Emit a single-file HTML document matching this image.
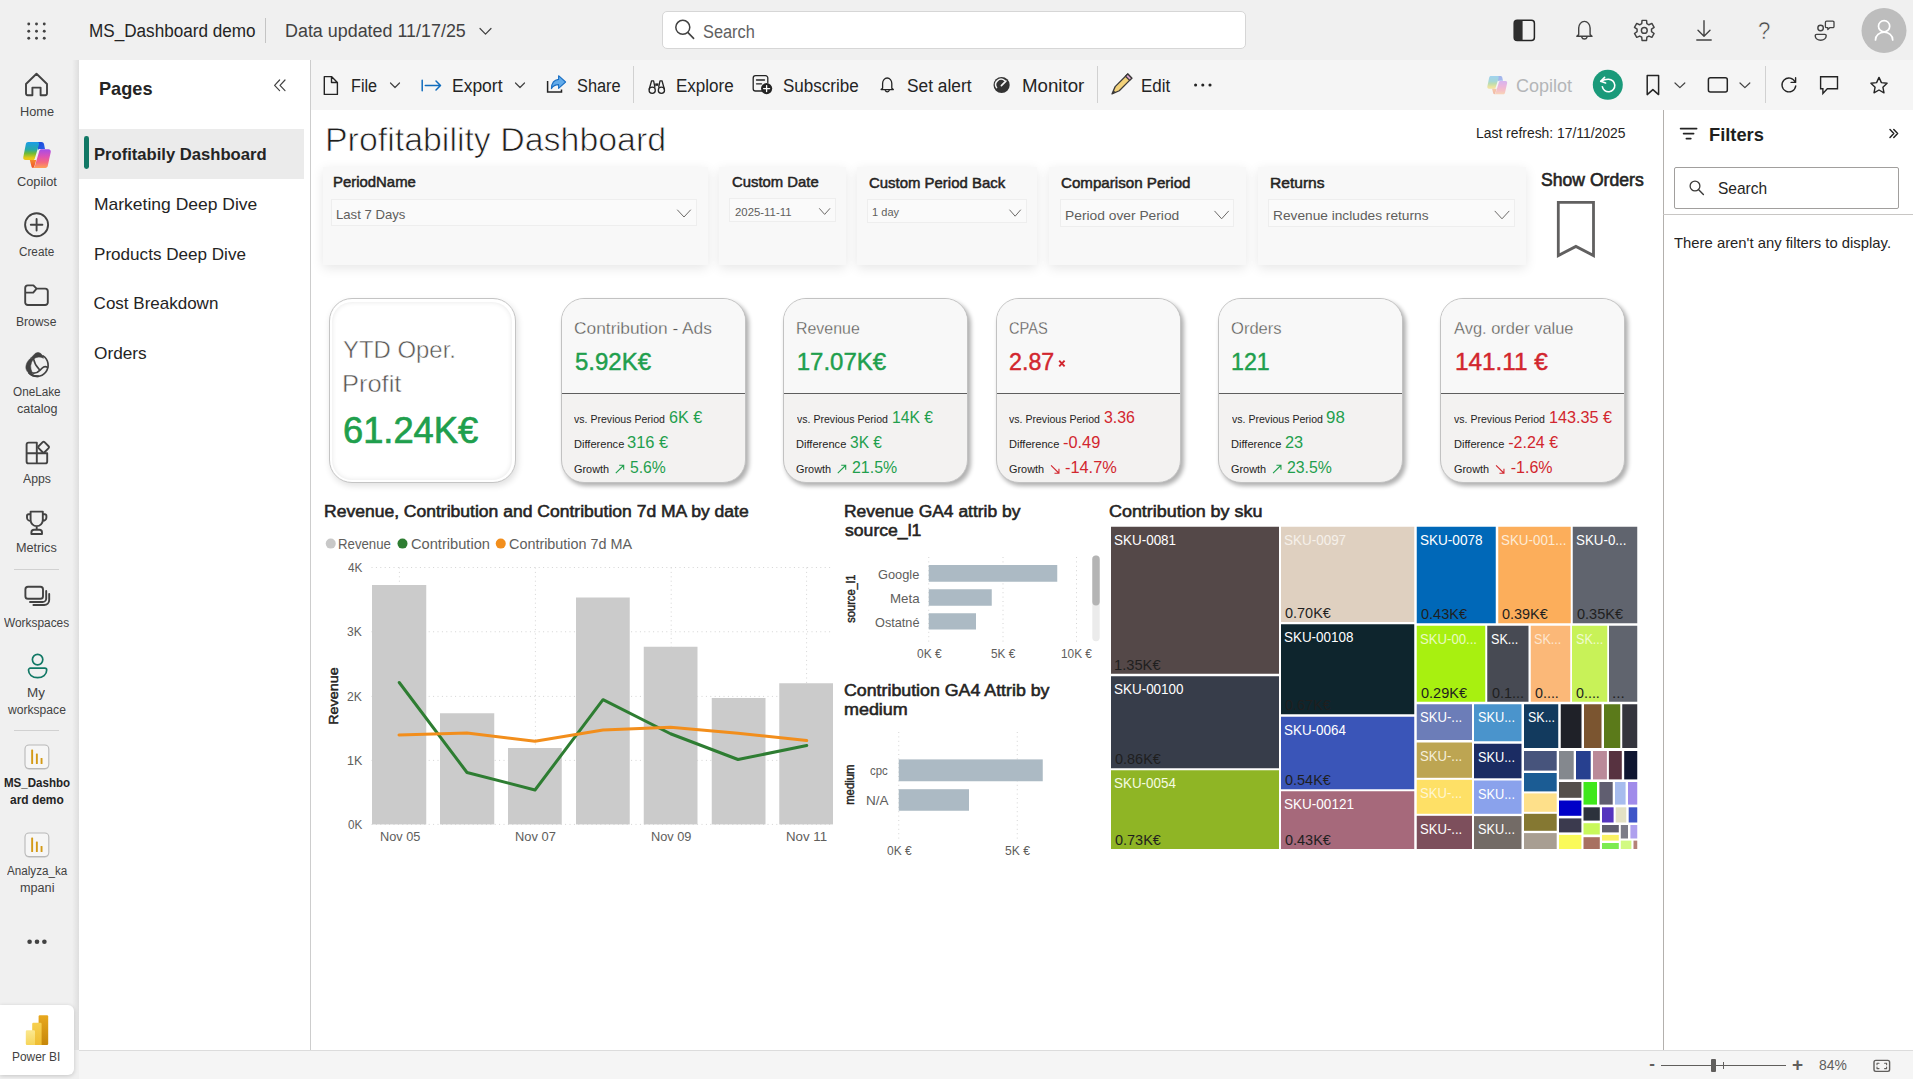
<!DOCTYPE html>
<html lang="en"><head><meta charset="utf-8"><title>MS_Dashboard demo - Power BI</title><style>
html,body{margin:0;padding:0}
body{width:1913px;height:1079px;overflow:hidden;background:#f0f0f0;position:relative;font-family:"Liberation Sans",sans-serif;}
.b{position:absolute;box-sizing:content-box}
.t{position:absolute;white-space:pre;display:block;transform-origin:0 50%}
.ov{position:absolute;left:0;top:0;pointer-events:none}
</style></head>
<body>
<div class="b" style="left:72px;top:60px;width:7px;height:990px;background:linear-gradient(to right,rgba(0,0,0,0),rgba(0,0,0,.075));"></div>
<div class="b" style="left:79px;top:60px;width:231px;height:990px;background:#fff;"></div>
<div class="b" style="left:310px;top:60px;width:1px;height:990px;background:#cdcdcd;"></div>
<div class="b" style="left:311px;top:60px;width:1602px;height:50px;background:#f5f5f5;"></div>
<div class="b" style="left:311px;top:110px;width:1352px;height:940px;background:#fff;"></div>
<div class="b" style="left:1663px;top:110px;width:250px;height:940px;background:#fff;"></div>
<div class="b" style="left:1662.5px;top:110px;width:1.3px;height:940px;background:#b3b0ad;"></div>
<div class="b" style="left:79px;top:1050px;width:1834px;height:29px;background:#f5f5f5;border-top:1px solid #dcdcdc;"></div>
<div class="b" style="left:0px;top:1005px;width:74px;height:70px;background:#fff;border-radius:0 6px 6px 0;box-shadow:0 1px 4px rgba(0,0,0,.18);"></div>
<div class="b" style="left:661.75px;top:10.5px;width:581.75px;height:36.75px;background:#fff;border:1px solid #d6d6d6;border-radius:5px;"></div>
<div class="b" style="left:79px;top:129px;width:224.5px;height:49.5px;background:#ebebeb;"></div>
<div class="b" style="left:84px;top:136px;width:4.8px;height:33px;background:#117865;border-radius:2.4px;"></div>
<div class="b" style="left:13.75px;top:569px;width:45px;height:1px;background:#d1d1d1;"></div>
<div class="b" style="left:13.75px;top:730px;width:45px;height:1px;background:#d1d1d1;"></div>
<div class="b" style="left:264.6px;top:18px;width:1px;height:24.5px;background:#c4c4c4;"></div>
<div class="b" style="left:633px;top:66px;width:1px;height:37px;background:#d1d1d1;"></div>
<div class="b" style="left:1097px;top:66px;width:1px;height:37px;background:#d1d1d1;"></div>
<div class="b" style="left:1765px;top:66px;width:1px;height:37px;background:#d1d1d1;"></div>
<div class="b" style="left:1674px;top:167px;width:222.9px;height:40.1px;background:#fff;border:1px solid #a19f9d;border-radius:2px;"></div>
<div class="b" style="left:1663px;top:214px;width:250px;height:1px;background:#c8c6c4;"></div>
<span class="t" style="left:88.55px;top:21.76px;font-size:18px;line-height:18px;color:#242424;transform:scaleX(0.9515);">MS_Dashboard demo</span>
<span class="t" style="left:285.01px;top:21.76px;font-size:18px;line-height:18px;color:#424242;transform:scaleX(0.9944);">Data updated 11/17/25</span>
<span class="t" style="left:703.12px;top:22.76px;font-size:18px;line-height:18px;color:#616161;transform:scaleX(0.9086);">Search</span>
<span class="t" style="left:19.51px;top:105.84px;font-size:12px;line-height:12px;color:#424242;transform:scaleX(1.0614);">Home</span>
<span class="t" style="left:16.77px;top:176.34px;font-size:12px;line-height:12px;color:#424242;transform:scaleX(1.0652);">Copilot</span>
<span class="t" style="left:19.29px;top:246.34px;font-size:12px;line-height:12px;color:#424242;transform:scaleX(0.9763);">Create</span>
<span class="t" style="left:16.31px;top:315.84px;font-size:12px;line-height:12px;color:#424242;transform:scaleX(1.0098);">Browse</span>
<span class="t" style="left:13.19px;top:386.09px;font-size:12px;line-height:12px;color:#424242;transform:scaleX(0.9777);">OneLake</span>
<span class="t" style="left:16.83px;top:402.84px;font-size:12px;line-height:12px;color:#424242;transform:scaleX(1.0461);">catalog</span>
<span class="t" style="left:22.95px;top:472.84px;font-size:12px;line-height:12px;color:#424242;transform:scaleX(1.0185);">Apps</span>
<span class="t" style="left:16.01px;top:542.34px;font-size:12px;line-height:12px;color:#424242;transform:scaleX(1.0537);">Metrics</span>
<span class="t" style="left:4.33px;top:617.09px;font-size:12px;line-height:12px;color:#424242;transform:scaleX(0.9904);">Workspaces</span>
<span class="t" style="left:27.24px;top:687.09px;font-size:12px;line-height:12px;color:#424242;transform:scaleX(1.1200);">My</span>
<span class="t" style="left:7.95px;top:703.59px;font-size:12px;line-height:12px;color:#424242;transform:scaleX(1.0088);">workspace</span>
<span class="t" style="left:4.45px;top:777.34px;font-size:12px;line-height:12px;color:#242424;font-weight:700;transform:scaleX(0.9624);">MS_Dashbo</span>
<span class="t" style="left:10.02px;top:794.09px;font-size:12px;line-height:12px;color:#242424;font-weight:700;transform:scaleX(0.9954);">ard demo</span>
<span class="t" style="left:7.02px;top:864.84px;font-size:12px;line-height:12px;color:#424242;transform:scaleX(0.9704);">Analyza_ka</span>
<span class="t" style="left:20.02px;top:882.34px;font-size:12px;line-height:12px;color:#424242;transform:scaleX(1.0547);">mpani</span>
<span class="t" style="left:12.35px;top:1050.59px;font-size:12px;line-height:12px;color:#424242;transform:scaleX(0.9922);">Power BI</span>
<span class="t" style="left:98.52px;top:80.09px;font-size:18.5px;line-height:18.5px;color:#242424;font-weight:700;transform:scaleX(0.9811);">Pages</span>
<span class="t" style="left:93.52px;top:145.61px;font-size:17px;line-height:17px;color:#242424;font-weight:700;transform:scaleX(0.9771);">Profitabily Dashboard</span>
<span class="t" style="left:93.97px;top:195.61px;font-size:17px;line-height:17px;color:#242424;transform:scaleX(1.0287);">Marketing Deep Dive</span>
<span class="t" style="left:93.99px;top:245.61px;font-size:17px;line-height:17px;color:#242424;transform:scaleX(1.0051);">Products Deep Dive</span>
<span class="t" style="left:93.62px;top:295.11px;font-size:17px;line-height:17px;color:#242424;">Cost Breakdown</span>
<span class="t" style="left:93.72px;top:345.11px;font-size:17px;line-height:17px;color:#242424;transform:scaleX(1.0137);">Orders</span>
<span class="t" style="left:351.10px;top:76.51px;font-size:18px;line-height:18px;color:#242424;transform:scaleX(0.9004);">File</span>
<span class="t" style="left:451.53px;top:76.51px;font-size:18px;line-height:18px;color:#242424;transform:scaleX(0.9706);">Export</span>
<span class="t" style="left:577.12px;top:76.51px;font-size:18px;line-height:18px;color:#242424;transform:scaleX(0.9083);">Share</span>
<span class="t" style="left:676.05px;top:76.51px;font-size:18px;line-height:18px;color:#242424;transform:scaleX(0.9458);">Explore</span>
<span class="t" style="left:782.58px;top:76.51px;font-size:18px;line-height:18px;color:#242424;transform:scaleX(0.9458);">Subscribe</span>
<span class="t" style="left:907.07px;top:76.51px;font-size:18px;line-height:18px;color:#242424;transform:scaleX(0.9617);">Set alert</span>
<span class="t" style="left:1021.96px;top:76.51px;font-size:18px;line-height:18px;color:#242424;transform:scaleX(1.0373);">Monitor</span>
<span class="t" style="left:1140.56px;top:76.51px;font-size:18px;line-height:18px;color:#242424;transform:scaleX(0.9417);">Edit</span>
<span class="t" style="left:1516.05px;top:76.51px;font-size:18px;line-height:18px;color:#b4b6b8;">Copilot</span>
<span class="t" style="left:1757.50px;top:19.51px;font-size:23.5px;line-height:23.5px;color:#424242;transform:scaleX(0.9465);-webkit-text-stroke:.5px #f0f0f0;">?</span>
<span class="t" style="left:1708.54px;top:125.17px;font-size:19px;line-height:19px;color:#201f1e;font-weight:700;transform:scaleX(0.9630);">Filters</span>
<span class="t" style="left:1718.13px;top:180.11px;font-size:17px;line-height:17px;color:#252423;transform:scaleX(0.9127);">Search</span>
<span class="t" style="left:1674.18px;top:236.48px;font-size:14.5px;line-height:14.5px;color:#252423;transform:scaleX(1.0235);">There aren't any filters to display.</span>
<span class="t" style="left:1649.27px;top:1055.11px;font-size:17px;line-height:17px;color:#605e5c;font-weight:700;">-</span>
<span class="t" style="left:1791.90px;top:1054.92px;font-size:19px;line-height:19px;color:#605e5c;font-weight:700;">+</span>
<span class="t" style="left:1819.23px;top:1058.15px;font-size:14px;line-height:14px;color:#605e5c;transform:scaleX(0.9916);">84%</span>
<div class="b" style="left:1661px;top:1064.5px;width:125px;height:1px;background:#605e5c;"></div>
<div class="b" style="left:1710.5px;top:1058.5px;width:5px;height:13.5px;background:#605e5c;border-radius:1px;"></div>
<div class="b" style="left:1723px;top:1062px;width:1px;height:6.5px;background:#605e5c;"></div>
<svg class="ov" width="1913" height="1079" viewBox="0 0 1913 1079"><circle cx="28.75" cy="24" r="1.45" stroke="none" stroke-width="0" fill="#424242"/><circle cx="28.75" cy="31.25" r="1.45" stroke="none" stroke-width="0" fill="#424242"/><circle cx="28.75" cy="38.25" r="1.45" stroke="none" stroke-width="0" fill="#424242"/><circle cx="36.5" cy="24" r="1.45" stroke="none" stroke-width="0" fill="#424242"/><circle cx="36.5" cy="31.25" r="1.45" stroke="none" stroke-width="0" fill="#424242"/><circle cx="36.5" cy="38.25" r="1.45" stroke="none" stroke-width="0" fill="#424242"/><circle cx="44.25" cy="24" r="1.45" stroke="none" stroke-width="0" fill="#424242"/><circle cx="44.25" cy="31.25" r="1.45" stroke="none" stroke-width="0" fill="#424242"/><circle cx="44.25" cy="38.25" r="1.45" stroke="none" stroke-width="0" fill="#424242"/><path d="M480 28.5 L485.5 34.2 L491 28.5" stroke="#424242" stroke-width="1.2" fill="none" stroke-linecap="round" stroke-linejoin="round" /><circle cx="682.8" cy="27.3" r="7" stroke="#424242" stroke-width="1.5" fill="none"/><path d="M688 32.6 L693.6 38.4" stroke="#424242" stroke-width="1.6" fill="none" stroke-linecap="round" stroke-linejoin="round" /><rect x="1514.2" y="20.2" width="20.2" height="20.2" rx="3" stroke="#242424" stroke-width="1.5" fill="none"/><path d="M1517 20.2 h5.6 v20.2 h-5.6 a2.8 2.8 0 0 1 -2.8 -2.8 v-14.6 a2.8 2.8 0 0 1 2.8 -2.8z" fill="#2e2e2e"/><path d="M1578.7 34.6 V28 a5.7 6.6 0 0 1 11.4 0 V34.6 l1.9 1.6 H1576.8 z" stroke="#424242" stroke-width="1.4" fill="none" stroke-linecap="round" stroke-linejoin="round" /><path d="M1581.8 37.3 a2.7 2.4 0 0 0 5.2 0" stroke="#424242" stroke-width="1.4" fill="none" stroke-linecap="round" stroke-linejoin="round" /><path d="M1641.73 23.57 L1642.05 20.35 L1646.55 20.35 L1646.87 23.57 L1648.93 24.76 L1651.88 23.43 L1654.13 27.32 L1651.50 29.21 L1651.50 31.59 L1654.13 33.48 L1651.88 37.37 L1648.93 36.04 L1646.87 37.23 L1646.55 40.45 L1642.05 40.45 L1641.73 37.23 L1639.67 36.04 L1636.72 37.37 L1634.47 33.48 L1637.10 31.59 L1637.10 29.21 L1634.47 27.32 L1636.72 23.43 L1639.67 24.76Z" stroke="#424242" stroke-width="1.45" fill="none" stroke-linecap="round" stroke-linejoin="round" /><circle cx="1644.3" cy="30.4" r="2.9" stroke="#424242" stroke-width="1.45" fill="none"/><path d="M1704 20.8 V36 M1698 30.3 L1704 36.3 L1710 30.3 M1696.8 40 H1711.2" stroke="#424242" stroke-width="1.4" fill="none" stroke-linecap="round" stroke-linejoin="round" /><circle cx="1820.6" cy="28" r="2.75" stroke="#424242" stroke-width="1.4" fill="none"/><path d="M1816.6 34.4 H1824.8 a1.4 1.4 0 0 1 1.4 1.4 C1826.2 38.6 1823.6 40.2 1820.7 40.2 C1817.8 40.2 1815.2 38.6 1815.2 35.8 a1.4 1.4 0 0 1 1.4 -1.4z" stroke="#424242" stroke-width="1.4" fill="none" stroke-linecap="round" stroke-linejoin="round" /><path d="M1826.6 21.2 h6.2 a1.2 1.2 0 0 1 1.2 1.2 v4 a1.2 1.2 0 0 1 -1.2 1.2 h-2.8 l-2.2 2 v-2 h-1.2 a1.2 1.2 0 0 1 -1.2 -1.2 v-4 a1.2 1.2 0 0 1 1.2 -1.2z" stroke="#424242" stroke-width="1.3" fill="none" stroke-linecap="round" stroke-linejoin="round" /><circle cx="1884" cy="30.5" r="22.5" stroke="none" stroke-width="0" fill="#bdbdbd"/><circle cx="1884.1" cy="26.2" r="5.6" stroke="#fff" stroke-width="1.7" fill="none"/><path d="M1875.5 39.9 a8.6 7.7 0 0 1 17.2 0" stroke="#fff" stroke-width="1.7" fill="none" stroke-linecap="round" stroke-linejoin="round" /><path d="M324.3 76.6 h7.2 l5.9 5.9 v11.9 h-13.1z M331.5 76.6 v5.9 h5.9" stroke="#242424" stroke-width="1.4" fill="none" stroke-linecap="round" stroke-linejoin="round" /><path d="M390.5 83 L395.0 87.5 L399.5 83" stroke="#424242" stroke-width="1.2" fill="none" stroke-linecap="round" stroke-linejoin="round" /><path d="M422.2 80.3 V90.7 M425.3 85.5 H440.3 M436 81 L440.5 85.5 L436 90" stroke="#0f6cbd" stroke-width="1.5" fill="none" stroke-linecap="round" stroke-linejoin="round" /><path d="M515.5 83 L520.0 87.5 L524.5 83" stroke="#424242" stroke-width="1.2" fill="none" stroke-linecap="round" stroke-linejoin="round" /><path d="M547.6 81 V92 H561.5 V89.5" stroke="#242424" stroke-width="1.5" fill="none" stroke-linejoin="miter"/><path d="M558.6 75.7 L565.6 82 L558.6 88.3 V84.6 C555.3 84.6 553 85.9 551.4 88.6 C551.6 83.4 554 79.9 558.6 79.4z" stroke="#1a6fc4" stroke-width="1.1" fill="#62abea" stroke-linecap="round" stroke-linejoin="round" /><path d="M651.6 80.8 h2 l1.3 6.4 M662 80.8 h-2 l-1.3 6.4 M651.6 80.8 l-2.4 8.4 M662 80.8 l2.4 8.4" stroke="#242424" stroke-width="1.3" fill="none" stroke-linecap="round" stroke-linejoin="round" /><rect x="655.2" y="83.4" width="3.2" height="2.4" fill="#242424"/><circle cx="652.2" cy="90.2" r="3.1" stroke="#242424" stroke-width="1.3" fill="none"/><circle cx="661.4" cy="90.2" r="3.1" stroke="#242424" stroke-width="1.3" fill="none"/><path d="M762 91 h-6.5 a2.3 2.3 0 0 1 -2.3 -2.3 v-10.7 a2.3 2.3 0 0 1 2.3 -2.3 h10 a2.3 2.3 0 0 1 2.3 2.3 v4.5 M756.5 80 h8 M756.5 83.8 h5" stroke="#242424" stroke-width="1.3" fill="none" stroke-linecap="round" stroke-linejoin="round" /><circle cx="766.6" cy="88.6" r="5.6" stroke="none" stroke-width="0" fill="#242424"/><path d="M766.6 85.6 v6 M763.6 88.6 h6" stroke="#fff" stroke-width="1.3" fill="none" stroke-linecap="round" stroke-linejoin="round" /><path d="M882.6 88.2 V83.4 a4.6 5.4 0 0 1 9.2 0 V88.2 l1.5 1.4 H881.1z" stroke="#242424" stroke-width="1.3" fill="none" stroke-linecap="round" stroke-linejoin="round" /><path d="M885.3 90.6 a2.1 1.9 0 0 0 3.9 0" stroke="#242424" stroke-width="1.3" fill="none" stroke-linecap="round" stroke-linejoin="round" /><circle cx="1001.6" cy="85" r="8.1" stroke="none" stroke-width="0" fill="#333333"/><path d="M996.6 87.6 A5.4 5.4 0 0 1 1004.6 80.5" stroke="#f5f5f5" stroke-width="1.5" fill="none" stroke-linecap="round" stroke-linejoin="round" /><path d="M1001.4 85.6 L1005.9 81.2" stroke="#f5f5f5" stroke-width="1.7" fill="none" stroke-linecap="round" stroke-linejoin="round" /><g transform="translate(1120.9 85) rotate(45)"><path d="M-2.9 -12.6 h5.8 v17.8 l-2.9 7.4 l-2.9 -7.4z" fill="#f3d27a" stroke="#3b3a39" stroke-width="1.3" stroke-linejoin="round"/><path d="M-2.9 -12.6 h5.8 v3.2 h-5.8z" fill="#dba6cf" stroke="#3b3a39" stroke-width="1.3" stroke-linejoin="round"/><path d="M-1.5 8.9 h3 l-1.5 3.7z" fill="#3b3a39"/></g><circle cx="1195.6" cy="85" r="1.55" stroke="none" stroke-width="0" fill="#242424"/><circle cx="1202.8" cy="85" r="1.55" stroke="none" stroke-width="0" fill="#242424"/><circle cx="1210" cy="85" r="1.55" stroke="none" stroke-width="0" fill="#242424"/><g opacity="0.38" transform="translate(1487.3 76) scale(0.72 0.7)"><defs><linearGradient id="cpA" x1="0" y1="0" x2="0" y2="1"><stop offset="0" stop-color="#1a9ce8"/><stop offset=".42" stop-color="#27a9a6"/><stop offset=".62" stop-color="#6cba3a"/><stop offset=".88" stop-color="#e4c916"/><stop offset="1" stop-color="#ecc71c"/></linearGradient><linearGradient id="cpB" x1="0" y1="0" x2="1" y2="1"><stop offset="0" stop-color="#1746d6"/><stop offset="1" stop-color="#2d62ea"/></linearGradient><linearGradient id="cpC" x1="0" y1="0" x2="0" y2="1"><stop offset="0" stop-color="#a64ce8"/><stop offset=".4" stop-color="#de52b4"/><stop offset=".7" stop-color="#f4687e"/><stop offset="1" stop-color="#ffa056"/></linearGradient><linearGradient id="cpD" x1="0" y1="0" x2="0" y2="1"><stop offset="0" stop-color="#f58a2c"/><stop offset="1" stop-color="#ef4f2a"/></linearGradient></defs><path d="M13.6 0 H18.2 C19.6 0 20.5 0.8 20.8 2.1 L21.8 6.9 H16.6 C15.6 6.9 15.1 7.3 14.8 8.3 Z" fill="url(#cpB)"/><path d="M5 0 H14.2 C15.8 0 16.2 1 15.8 2.4 L11.6 16.6 C11.3 17.6 10.6 18.1 9.6 18.1 H2.4 C0.6 18.1 -0.3 16.8 0.1 15 L2.6 2.2 C2.9 0.8 3.7 0 5 0Z" fill="url(#cpA)"/><path d="M6.6 18.1 H13 L11.3 24 C11 25.2 10.6 25.9 9.8 25.9 C8.9 25.9 8.5 25.3 8.2 24.2Z" fill="url(#cpD)"/><path d="M18.6 7.2 H25.2 C27 7.2 27.9 8.5 27.5 10.3 L24.6 23.8 C24.3 25.2 23.5 25.9 22.2 25.9 H10 C11 25.6 11.4 25 11.8 23.6 L16 9.2 C16.4 7.8 17.2 7.2 18.6 7.2Z" fill="url(#cpC)"/></g><circle cx="1607.8" cy="84.8" r="15" stroke="none" stroke-width="0" fill="#1a9a7a"/><path d="M1600.9 81.3 Q1604.2 79.1 1608.5 79.2 A6.3 6.3 0 1 1 1602.3 86.7" stroke="#fff" stroke-width="1.6" fill="none" stroke-linecap="round" stroke-linejoin="round" /><path d="M1604.6 77.4 L1600.7 81.3 L1605.6 82.9" stroke="#fff" stroke-width="1.6" fill="none" stroke-linecap="round" stroke-linejoin="round" /><path d="M1647.2 75.4 h11.4 v19.2 l-5.7 -5 l-5.7 5z" stroke="#242424" stroke-width="1.5" fill="none" stroke-linecap="round" stroke-linejoin="round" /><path d="M1675 83 L1679.9 87.6 L1684.8 83" stroke="#424242" stroke-width="1.2" fill="none" stroke-linecap="round" stroke-linejoin="round" /><rect x="1708.4" y="77.8" width="18.9" height="14.2" rx="2" stroke="#242424" stroke-width="1.5" fill="none"/><path d="M1740 83 L1744.9 87.6 L1749.8 83" stroke="#424242" stroke-width="1.2" fill="none" stroke-linecap="round" stroke-linejoin="round" /><path d="M1795.15 82 A6.9 6.9 0 1 0 1795.75 85.85" stroke="#242424" stroke-width="1.4" fill="none" stroke-linecap="round" stroke-linejoin="round" /><path d="M1795.6 77.8 V82.4 H1791.1" stroke="#242424" stroke-width="1.4" fill="none" stroke-linecap="round" stroke-linejoin="round" /><path d="M1820.6 76.7 H1837.5 V88.8 H1827.3 L1822.9 93.4 V88.8 H1820.6 Z" stroke="#242424" stroke-width="1.4" fill="none" stroke-linejoin="miter"/><path d="M1879.00 77.40 L1881.41 82.58 L1887.08 83.27 L1882.90 87.17 L1884.00 92.78 L1879.00 90.00 L1874.00 92.78 L1875.10 87.17 L1870.92 83.27 L1876.59 82.58Z" stroke="#242424" stroke-width="1.4" fill="none" stroke-linecap="round" stroke-linejoin="round" /><path d="M279.6 80 L274.6 85.3 L279.6 90.6 M285 80 L280 85.3 L285 90.6" stroke="#424242" stroke-width="1.2" fill="none" stroke-linecap="round" stroke-linejoin="round" /><path d="M1680.6 128.6 H1696.6 M1683.6 133.6 H1693.6 M1686.4 138.6 H1690.8" stroke="#242424" stroke-width="1.7" fill="none" stroke-linecap="round" stroke-linejoin="round" /><path d="M1890 129.6 L1893.8 133.5 L1890 137.4 M1893.8 129.6 L1897.6 133.5 L1893.8 137.4" stroke="#242424" stroke-width="1.5" fill="none" stroke-linecap="round" stroke-linejoin="round" /><circle cx="1695" cy="186" r="4.9" stroke="#3b3a39" stroke-width="1.3" fill="none"/><path d="M1698.7 189.7 L1703.4 194.4" stroke="#3b3a39" stroke-width="1.4" fill="none" stroke-linecap="round" stroke-linejoin="round" /><rect x="1874" y="1060.4" width="15.6" height="11" rx="1.8" stroke="#605e5c" stroke-width="1.4" fill="none"/><path d="M1877 1064.8 v-1.6 h2 M1886.6 1064.8 v-1.6 h-2 M1877 1067 v1.6 h2 M1886.6 1067 v1.6 h-2" stroke="#605e5c" stroke-width="1.1" fill="none" stroke-linecap="round" stroke-linejoin="round" /><path d="M26 84 L36.5 73.8 L47 84 V93.6 a1.6 1.6 0 0 1 -1.6 1.6 H40.6 V87.6 H32.4 V95.2 H27.6 a1.6 1.6 0 0 1 -1.6 -1.6z" stroke="#424242" stroke-width="1.9" fill="none" stroke-linecap="round" stroke-linejoin="round" /><g transform="translate(23.2 142)"><defs><linearGradient id="cpA" x1="0" y1="0" x2="0" y2="1"><stop offset="0" stop-color="#1a9ce8"/><stop offset=".42" stop-color="#27a9a6"/><stop offset=".62" stop-color="#6cba3a"/><stop offset=".88" stop-color="#e4c916"/><stop offset="1" stop-color="#ecc71c"/></linearGradient><linearGradient id="cpB" x1="0" y1="0" x2="1" y2="1"><stop offset="0" stop-color="#1746d6"/><stop offset="1" stop-color="#2d62ea"/></linearGradient><linearGradient id="cpC" x1="0" y1="0" x2="0" y2="1"><stop offset="0" stop-color="#a64ce8"/><stop offset=".4" stop-color="#de52b4"/><stop offset=".7" stop-color="#f4687e"/><stop offset="1" stop-color="#ffa056"/></linearGradient><linearGradient id="cpD" x1="0" y1="0" x2="0" y2="1"><stop offset="0" stop-color="#f58a2c"/><stop offset="1" stop-color="#ef4f2a"/></linearGradient></defs><path d="M13.6 0 H18.2 C19.6 0 20.5 0.8 20.8 2.1 L21.8 6.9 H16.6 C15.6 6.9 15.1 7.3 14.8 8.3 Z" fill="url(#cpB)"/><path d="M5 0 H14.2 C15.8 0 16.2 1 15.8 2.4 L11.6 16.6 C11.3 17.6 10.6 18.1 9.6 18.1 H2.4 C0.6 18.1 -0.3 16.8 0.1 15 L2.6 2.2 C2.9 0.8 3.7 0 5 0Z" fill="url(#cpA)"/><path d="M6.6 18.1 H13 L11.3 24 C11 25.2 10.6 25.9 9.8 25.9 C8.9 25.9 8.5 25.3 8.2 24.2Z" fill="url(#cpD)"/><path d="M18.6 7.2 H25.2 C27 7.2 27.9 8.5 27.5 10.3 L24.6 23.8 C24.3 25.2 23.5 25.9 22.2 25.9 H10 C11 25.6 11.4 25 11.8 23.6 L16 9.2 C16.4 7.8 17.2 7.2 18.6 7.2Z" fill="url(#cpC)"/></g><circle cx="36.6" cy="224.8" r="11.5" stroke="#424242" stroke-width="1.9" fill="none"/><path d="M36.6 219 V230.6 M30.8 224.8 H42.4" stroke="#424242" stroke-width="1.9" fill="none" stroke-linecap="round" stroke-linejoin="round" /><path d="M25.2 288 a2.6 2.6 0 0 1 2.6 -2.6 h5.6 l3.2 3.2 h8.6 a2.6 2.6 0 0 1 2.6 2.6 v11.2 a2.6 2.6 0 0 1 -2.6 2.6 h-17.4 a2.6 2.6 0 0 1 -2.6 -2.6z M25.2 292.6 h8 l3.4 -4" stroke="#424242" stroke-width="1.9" fill="none" stroke-linecap="round" stroke-linejoin="round" /><path d="M43.05 355.9 A11.1 11.1 0 1 1 29.15 373.05" stroke="#424242" stroke-width="1.7" fill="none" stroke-linecap="round" stroke-linejoin="round" /><path d="M30.9 357.9 C27.6 360.6 25.4 364.4 25.95 368.6 C26.5 370.9 27.6 372.2 29.15 373.6 L32.4 372.9 Q28.6 365.4 33.3 359.2 Z" fill="#424242" stroke="#424242" stroke-width=".5" stroke-linejoin="round"/><path d="M30.9 357.9 L35.4 353.3 Q38.2 351.6 40.8 353.5 Q42.8 355.3 43.5 358.2 Q38.2 355.4 33.3 359.2 Z" fill="#424242" stroke="#424242" stroke-width=".6" stroke-linejoin="round"/><path d="M33.7 359.4 Q34.6 364.6 39.2 369.4" stroke="#424242" stroke-width="1.6" fill="none" stroke-linecap="round" stroke-linejoin="round" /><path d="M30.6 372.4 C34.2 373.8 37.6 372.8 40.1 370.1 C42.6 367.4 44.6 365.4 47.6 367.4" stroke="#424242" stroke-width="1.6" fill="none" stroke-linecap="round" stroke-linejoin="round" /><path d="M29.6 373.2 Q33.2 376.2 38.2 376.25" stroke="#424242" stroke-width="2.0" fill="none" stroke-linecap="round" stroke-linejoin="round" /><path d="M36.8 442.6 H28.6 a2 2 0 0 0 -2 2 V461.4 a2 2 0 0 0 2 2 H45.2 a2 2 0 0 0 2 -2 V453.3 H26.6 M36.8 442.6 V463.4" stroke="#424242" stroke-width="1.9" fill="none" stroke-linecap="round" stroke-linejoin="round" /><rect x="39.4" y="443" width="8.4" height="8.4" rx="1.3" transform="rotate(45 43.6 447.2)" stroke="#424242" stroke-width="1.9" fill="#f0f0f0"/><path d="M30.6 511.6 h12.2 v8.4 a6.1 6.1 0 0 1 -12.2 0z M30.6 514.2 h-2 a1.6 1.6 0 0 0 -1.6 1.6 v1.6 a3.6 3.6 0 0 0 3.6 3.6 M42.8 514.2 h2 a1.6 1.6 0 0 1 1.6 1.6 v1.6 a3.6 3.6 0 0 1 -3.6 3.6 M36.7 526.2 v3.4 M31.4 534 v-1.6 a2.6 2.6 0 0 1 2.6 -2.6 h5.4 a2.6 2.6 0 0 1 2.6 2.6 v1.6z" stroke="#424242" stroke-width="1.9" fill="none" stroke-linecap="round" stroke-linejoin="round" /><rect x="25.4" y="586.8" width="17.6" height="12" rx="2.6" stroke="#424242" stroke-width="1.9" fill="none"/><path d="M30 602 h12.6 a3.6 3.6 0 0 0 3.6 -3.6 v-7.4 M33.4 605 h10.8 a5 5 0 0 0 5 -5 v-6" stroke="#424242" stroke-width="1.9" fill="none" stroke-linecap="round" stroke-linejoin="round" /><circle cx="37.6" cy="659.6" r="5.2" stroke="#117865" stroke-width="1.7" fill="none"/><path d="M30.4 668.2 H44.8 a1.9 1.9 0 0 1 1.9 1.9 C46.7 674.8 42.8 677.7 37.6 677.7 C32.4 677.7 28.5 674.8 28.5 670.1 a1.9 1.9 0 0 1 1.9 -1.9z" stroke="#117865" stroke-width="1.7" fill="none" stroke-linecap="round" stroke-linejoin="round" /><rect x="25" y="745.8" width="23.8" height="23.6" rx="4" fill="#cfcfcf"/><rect x="25" y="745.0" width="23.8" height="23.6" rx="4" stroke="#b8b8b8" stroke-width="1.1" fill="#f6f6f6"/><rect x="31.2" y="749.5" width="1.9" height="14.6" rx=".6" fill="#d49a16"/><rect x="35.9" y="753.5" width="1.9" height="10.6" rx=".6" fill="#d49a16"/><rect x="40.6" y="757.9" width="1.9" height="6.2" rx=".6" fill="#d49a16"/><rect x="25" y="833.8" width="23.8" height="23.6" rx="4" fill="#cfcfcf"/><rect x="25" y="833.0" width="23.8" height="23.6" rx="4" stroke="#b8b8b8" stroke-width="1.1" fill="#f6f6f6"/><rect x="31.2" y="837.5" width="1.9" height="14.6" rx=".6" fill="#d49a16"/><rect x="35.9" y="841.5" width="1.9" height="10.6" rx=".6" fill="#d49a16"/><rect x="40.6" y="845.9" width="1.9" height="6.2" rx=".6" fill="#d49a16"/><circle cx="29.6" cy="941.8" r="2.3" stroke="none" stroke-width="0" fill="#424242"/><circle cx="37" cy="941.8" r="2.3" stroke="none" stroke-width="0" fill="#424242"/><circle cx="44.4" cy="941.8" r="2.3" stroke="none" stroke-width="0" fill="#424242"/><defs><linearGradient id="pb1" x1="0" y1="0" x2="0" y2="1"><stop offset="0" stop-color="#e8a81e"/><stop offset="1" stop-color="#c6870a"/></linearGradient><linearGradient id="pb2" x1="0" y1="0" x2="0" y2="1"><stop offset="0" stop-color="#f7d04f"/><stop offset="1" stop-color="#efbd32"/></linearGradient><linearGradient id="pb3" x1="0" y1="0" x2="0" y2="1"><stop offset="0" stop-color="#fbe88f"/><stop offset="1" stop-color="#f6d55a"/></linearGradient></defs><rect x="38.6" y="1015.2" width="9.6" height="29.8" rx="1.2" fill="url(#pb1)"/><path d="M32.2 1024 a1.2 1.2 0 0 1 1.2 -1.2 h7 a1.2 1.2 0 0 1 1.2 1.2 v21 h-9.4z" fill="url(#pb2)"/><path d="M25.8 1031.4 a1.2 1.2 0 0 1 1.2 -1.2 h6.8 a1.2 1.2 0 0 1 1.2 1.2 v13.6 h-8 a1.2 1.2 0 0 1 -1.2 -1.2z" fill="url(#pb3)"/></svg>
<span class="t" style="left:324.95px;top:122.57px;font-size:33px;line-height:33px;color:#1f1e1d;transform:scaleX(1.0274);-webkit-text-stroke:.75px #fff;">Profitability Dashboard</span>
<span class="t" style="left:1476.01px;top:126.40px;font-size:14px;line-height:14px;color:#252423;transform:scaleX(0.9919);">Last refresh: 17/11/2025</span>
<div class="b" style="left:322.5px;top:167px;width:385px;height:97.5px;background:#f8f8f8;box-shadow:0 3px 11px rgba(0,0,0,.10);"></div>
<div class="b" style="left:330.5px;top:198.75px;width:364.25px;height:25.5px;background:#fafafa;border:1px solid #eeeeee;"></div>
<span class="t" style="left:333.01px;top:174.30px;font-size:15px;line-height:15px;color:#252423;-webkit-text-stroke:0.51px #252423;transform:scaleX(0.9939);">PeriodName</span>
<span class="t" style="left:335.99px;top:207.75px;font-size:13px;line-height:13px;color:#605e5c;transform:scaleX(1.0103);">Last 7 Days</span>
<div class="b" style="left:719px;top:167px;width:127px;height:97.5px;background:#f8f8f8;box-shadow:0 3px 11px rgba(0,0,0,.10);"></div>
<div class="b" style="left:729px;top:198px;width:105px;height:22px;background:#fafafa;border:1px solid #eeeeee;"></div>
<span class="t" style="left:731.88px;top:174.30px;font-size:15px;line-height:15px;color:#252423;-webkit-text-stroke:0.51px #252423;transform:scaleX(0.9899);">Custom Date</span>
<span class="t" style="left:735.11px;top:206.69px;font-size:11px;line-height:11px;color:#605e5c;transform:scaleX(1.0340);">2025-11-11</span>
<div class="b" style="left:856.75px;top:167px;width:179.75px;height:97.5px;background:#f8f8f8;box-shadow:0 3px 11px rgba(0,0,0,.10);"></div>
<div class="b" style="left:866.75px;top:199px;width:157.75px;height:22px;background:#fafafa;border:1px solid #eeeeee;"></div>
<span class="t" style="left:869.12px;top:175.30px;font-size:15px;line-height:15px;color:#252423;-webkit-text-stroke:0.51px #252423;transform:scaleX(0.9956);">Custom Period Back</span>
<span class="t" style="left:872.10px;top:207.19px;font-size:11px;line-height:11px;color:#605e5c;">1 day</span>
<div class="b" style="left:1049px;top:167px;width:196.5px;height:97.5px;background:#f8f8f8;box-shadow:0 3px 11px rgba(0,0,0,.10);"></div>
<div class="b" style="left:1059.75px;top:199px;width:172.25px;height:26px;background:#fafafa;border:1px solid #eeeeee;"></div>
<span class="t" style="left:1061.36px;top:175.30px;font-size:15px;line-height:15px;color:#252423;-webkit-text-stroke:0.51px #252423;transform:scaleX(1.0089);">Comparison Period</span>
<span class="t" style="left:1064.94px;top:209.00px;font-size:13px;line-height:13px;color:#605e5c;transform:scaleX(1.0613);">Period over Period</span>
<div class="b" style="left:1258px;top:167px;width:268px;height:97.5px;background:#f8f8f8;box-shadow:0 3px 11px rgba(0,0,0,.10);"></div>
<div class="b" style="left:1267.75px;top:199px;width:244.75px;height:26px;background:#fafafa;border:1px solid #eeeeee;"></div>
<span class="t" style="left:1269.96px;top:175.30px;font-size:15px;line-height:15px;color:#252423;-webkit-text-stroke:0.51px #252423;transform:scaleX(1.0392);">Returns</span>
<span class="t" style="left:1272.95px;top:209.00px;font-size:13px;line-height:13px;color:#605e5c;transform:scaleX(1.0548);">Revenue includes returns</span>
<span class="t" style="left:1540.55px;top:170.51px;font-size:18px;line-height:18px;color:#252423;-webkit-text-stroke:0.61px #252423;transform:scaleX(0.9779);">Show Orders</span>
<div class="b" style="left:329px;top:298.3px;width:184.5px;height:182.5px;background:#fff;border:1px solid #c4c4c4;border-radius:23px;box-shadow:1.5px 3px 6px rgba(0,0,0,.12);"></div>
<div class="b" style="left:332.2px;top:301.5px;width:180.1px;height:178.1px;border-radius:20px;box-shadow:inset 0 0 5px 0 rgba(0,0,0,.10);"></div>
<span class="t" style="left:342.76px;top:338.01px;font-size:24.5px;line-height:24.5px;color:#565452;transform:scaleX(0.9758);-webkit-text-stroke:.5px #fff;">YTD Oper.</span>
<span class="t" style="left:341.92px;top:371.76px;font-size:24.5px;line-height:24.5px;color:#565452;transform:scaleX(1.0389);-webkit-text-stroke:.5px #fff;">Profit</span>
<span class="t" style="left:342.93px;top:412.78px;font-size:36px;line-height:36px;color:#1f9f4d;transform:scaleX(1.0076);-webkit-text-stroke:.7px #1f9f4d;">61.24K€</span>
<div class="b" style="left:560.5px;top:298.3px;width:183.0px;height:182.5px;border:1px solid #c2c2c2;border-radius:23px;overflow:hidden;background:#f3f2f1;box-shadow:2.5px 3px 4px rgba(0,0,0,.31);"><div style="position:absolute;left:0;top:0;right:0;height:93.3px;background:#f8f8f8;border-bottom:1.1px solid #5e5e5e;"></div></div>
<span class="t" style="left:573.61px;top:319.86px;font-size:17px;line-height:17px;color:#5a5856;transform:scaleX(1.0208);-webkit-text-stroke:.3px #f8f8f8;">Contribution - Ads</span>
<span class="t" style="left:575.00px;top:349.78px;font-size:24px;line-height:24px;color:#1f9f4d;-webkit-text-stroke:.45px #1f9f4d;">5.92K€</span>
<span class="t" style="left:574.25px;top:413.97px;font-size:11.5px;line-height:11.5px;color:#252423;transform:scaleX(0.9182);">vs. Previous Period</span>
<span class="t" style="left:573.69px;top:438.97px;font-size:11.5px;line-height:11.5px;color:#252423;transform:scaleX(0.9637);">Difference</span>
<span class="t" style="left:574.18px;top:463.97px;font-size:11.5px;line-height:11.5px;color:#252423;transform:scaleX(0.9477);">Growth</span>
<span class="t" style="left:668.52px;top:410.26px;font-size:16px;line-height:16px;color:#1f9f4d;transform:scaleX(1.0110);">6K €</span>
<span class="t" style="left:627.28px;top:435.26px;font-size:16px;line-height:16px;color:#1f9f4d;transform:scaleX(1.0306);">316 €</span>
<span class="t" style="left:630.15px;top:460.26px;font-size:16px;line-height:16px;color:#1f9f4d;transform:scaleX(0.9820);">5.6%</span>
<div class="b" style="left:783px;top:298.3px;width:183.0px;height:182.5px;border:1px solid #c2c2c2;border-radius:23px;overflow:hidden;background:#f3f2f1;box-shadow:2.5px 3px 4px rgba(0,0,0,.31);"><div style="position:absolute;left:0;top:0;right:0;height:93.3px;background:#f8f8f8;border-bottom:1.1px solid #5e5e5e;"></div></div>
<span class="t" style="left:795.81px;top:319.86px;font-size:17px;line-height:17px;color:#5a5856;transform:scaleX(0.9369);-webkit-text-stroke:.3px #f8f8f8;">Revenue</span>
<span class="t" style="left:796.76px;top:349.78px;font-size:24px;line-height:24px;color:#1f9f4d;-webkit-text-stroke:.45px #1f9f4d;">17.07K€</span>
<span class="t" style="left:796.50px;top:413.97px;font-size:11.5px;line-height:11.5px;color:#252423;transform:scaleX(0.9182);">vs. Previous Period</span>
<span class="t" style="left:795.94px;top:438.97px;font-size:11.5px;line-height:11.5px;color:#252423;transform:scaleX(0.9637);">Difference</span>
<span class="t" style="left:796.43px;top:463.97px;font-size:11.5px;line-height:11.5px;color:#252423;transform:scaleX(0.9477);">Growth</span>
<span class="t" style="left:891.52px;top:410.26px;font-size:16px;line-height:16px;color:#1f9f4d;transform:scaleX(0.9788);">14K €</span>
<span class="t" style="left:849.82px;top:435.26px;font-size:16px;line-height:16px;color:#1f9f4d;transform:scaleX(0.9716);">3K €</span>
<span class="t" style="left:852.21px;top:460.26px;font-size:16px;line-height:16px;color:#1f9f4d;transform:scaleX(0.9953);">21.5%</span>
<div class="b" style="left:995.5px;top:298.3px;width:183.0px;height:182.5px;border:1px solid #c2c2c2;border-radius:23px;overflow:hidden;background:#f3f2f1;box-shadow:2.5px 3px 4px rgba(0,0,0,.31);"><div style="position:absolute;left:0;top:0;right:0;height:93.3px;background:#f8f8f8;border-bottom:1.1px solid #5e5e5e;"></div></div>
<span class="t" style="left:1008.75px;top:319.86px;font-size:17px;line-height:17px;color:#5a5856;transform:scaleX(0.8608);-webkit-text-stroke:.3px #f8f8f8;">CPAS</span>
<span class="t" style="left:1008.78px;top:349.78px;font-size:24px;line-height:24px;color:#d2262e;transform:scaleX(0.9685);-webkit-text-stroke:.45px #d2262e;">2.87</span>
<span class="t" style="left:1009.25px;top:413.97px;font-size:11.5px;line-height:11.5px;color:#252423;transform:scaleX(0.9182);">vs. Previous Period</span>
<span class="t" style="left:1008.69px;top:438.97px;font-size:11.5px;line-height:11.5px;color:#252423;transform:scaleX(0.9637);">Difference</span>
<span class="t" style="left:1009.18px;top:463.97px;font-size:11.5px;line-height:11.5px;color:#252423;transform:scaleX(0.9477);">Growth</span>
<span class="t" style="left:1104.05px;top:410.26px;font-size:16px;line-height:16px;color:#d2262e;transform:scaleX(0.9902);">3.36</span>
<span class="t" style="left:1063.27px;top:435.26px;font-size:16px;line-height:16px;color:#d2262e;transform:scaleX(1.0204);">-0.49</span>
<span class="t" style="left:1065.27px;top:460.26px;font-size:16px;line-height:16px;color:#d2262e;transform:scaleX(1.0212);">-14.7%</span>
<div class="b" style="left:1217.75px;top:298.3px;width:183.0px;height:182.5px;border:1px solid #c2c2c2;border-radius:23px;overflow:hidden;background:#f3f2f1;box-shadow:2.5px 3px 4px rgba(0,0,0,.31);"><div style="position:absolute;left:0;top:0;right:0;height:93.3px;background:#f8f8f8;border-bottom:1.1px solid #5e5e5e;"></div></div>
<span class="t" style="left:1231.00px;top:319.86px;font-size:17px;line-height:17px;color:#5a5856;transform:scaleX(0.9743);-webkit-text-stroke:.3px #f8f8f8;">Orders</span>
<span class="t" style="left:1231.31px;top:349.78px;font-size:24px;line-height:24px;color:#1f9f4d;transform:scaleX(0.9664);-webkit-text-stroke:.45px #1f9f4d;">121</span>
<span class="t" style="left:1231.50px;top:413.97px;font-size:11.5px;line-height:11.5px;color:#252423;transform:scaleX(0.9182);">vs. Previous Period</span>
<span class="t" style="left:1230.94px;top:438.97px;font-size:11.5px;line-height:11.5px;color:#252423;transform:scaleX(0.9637);">Difference</span>
<span class="t" style="left:1231.43px;top:463.97px;font-size:11.5px;line-height:11.5px;color:#252423;transform:scaleX(0.9477);">Growth</span>
<span class="t" style="left:1326.11px;top:410.26px;font-size:16px;line-height:16px;color:#1f9f4d;transform:scaleX(1.0550);">98</span>
<span class="t" style="left:1284.69px;top:435.26px;font-size:16px;line-height:16px;color:#1f9f4d;transform:scaleX(1.0202);">23</span>
<span class="t" style="left:1287.22px;top:460.26px;font-size:16px;line-height:16px;color:#1f9f4d;transform:scaleX(0.9896);">23.5%</span>
<div class="b" style="left:1440.25px;top:298.3px;width:183.0px;height:182.5px;border:1px solid #c2c2c2;border-radius:23px;overflow:hidden;background:#f3f2f1;box-shadow:2.5px 3px 4px rgba(0,0,0,.31);"><div style="position:absolute;left:0;top:0;right:0;height:93.3px;background:#f8f8f8;border-bottom:1.1px solid #5e5e5e;"></div></div>
<span class="t" style="left:1454.45px;top:319.86px;font-size:17px;line-height:17px;color:#5a5856;transform:scaleX(0.9679);-webkit-text-stroke:.3px #f8f8f8;">Avg. order value</span>
<span class="t" style="left:1454.73px;top:349.78px;font-size:24px;line-height:24px;color:#d2262e;transform:scaleX(1.0127);-webkit-text-stroke:.45px #d2262e;">141.11 €</span>
<span class="t" style="left:1454.25px;top:413.97px;font-size:11.5px;line-height:11.5px;color:#252423;transform:scaleX(0.9182);">vs. Previous Period</span>
<span class="t" style="left:1453.69px;top:438.97px;font-size:11.5px;line-height:11.5px;color:#252423;transform:scaleX(0.9637);">Difference</span>
<span class="t" style="left:1454.18px;top:463.97px;font-size:11.5px;line-height:11.5px;color:#252423;transform:scaleX(0.9477);">Growth</span>
<span class="t" style="left:1549.24px;top:410.26px;font-size:16px;line-height:16px;color:#d2262e;transform:scaleX(1.0116);">143.35 €</span>
<span class="t" style="left:1508.28px;top:435.26px;font-size:16px;line-height:16px;color:#d2262e;">-2.24 €</span>
<span class="t" style="left:1510.78px;top:460.26px;font-size:16px;line-height:16px;color:#d2262e;">-1.6%</span>
<span class="t" style="left:323.91px;top:503.96px;font-size:16px;line-height:16px;color:#252423;-webkit-text-stroke:0.54px #252423;transform:scaleX(1.0950);">Revenue, Contribution and Contribution 7d MA by date</span>
<span class="t" style="left:844.21px;top:503.96px;font-size:16px;line-height:16px;color:#252423;-webkit-text-stroke:0.54px #252423;transform:scaleX(1.0899);">Revenue GA4 attrib by</span>
<span class="t" style="left:844.76px;top:523.46px;font-size:16px;line-height:16px;color:#252423;-webkit-text-stroke:0.54px #252423;transform:scaleX(1.1005);">source_l1</span>
<span class="t" style="left:844.47px;top:682.71px;font-size:16px;line-height:16px;color:#252423;-webkit-text-stroke:0.54px #252423;transform:scaleX(1.1108);">Contribution GA4 Attrib by</span>
<span class="t" style="left:844.18px;top:702.21px;font-size:16px;line-height:16px;color:#252423;-webkit-text-stroke:0.54px #252423;transform:scaleX(1.1200);">medium</span>
<span class="t" style="left:1109.41px;top:503.96px;font-size:16px;line-height:16px;color:#252423;-webkit-text-stroke:0.54px #252423;transform:scaleX(1.1200);">Contribution by sku</span>
<span class="t" style="left:338.31px;top:536.55px;font-size:14px;line-height:14px;color:#605e5c;transform:scaleX(0.9443);">Revenue</span>
<span class="t" style="left:410.82px;top:536.55px;font-size:14px;line-height:14px;color:#605e5c;transform:scaleX(1.0463);">Contribution</span>
<span class="t" style="left:508.78px;top:536.55px;font-size:14px;line-height:14px;color:#605e5c;transform:scaleX(1.0273);">Contribution 7d MA</span>
<span class="t" style="left:347.53px;top:561.10px;font-size:13px;line-height:13px;color:#605e5c;transform:scaleX(0.9072);">4K</span>
<span class="t" style="left:347.14px;top:625.35px;font-size:13px;line-height:13px;color:#605e5c;transform:scaleX(0.9325);">3K</span>
<span class="t" style="left:347.10px;top:689.60px;font-size:13px;line-height:13px;color:#605e5c;transform:scaleX(0.9354);">2K</span>
<span class="t" style="left:346.70px;top:753.80px;font-size:13px;line-height:13px;color:#605e5c;transform:scaleX(0.9615);">1K</span>
<span class="t" style="left:347.65px;top:818.00px;font-size:13px;line-height:13px;color:#605e5c;transform:scaleX(0.8994);">0K</span>
<span class="t" style="left:379.77px;top:829.90px;font-size:13px;line-height:13px;color:#605e5c;transform:scaleX(0.9825);">Nov 05</span>
<span class="t" style="left:515.11px;top:829.90px;font-size:13px;line-height:13px;color:#605e5c;transform:scaleX(0.9903);">Nov 07</span>
<span class="t" style="left:650.87px;top:829.90px;font-size:13px;line-height:13px;color:#605e5c;transform:scaleX(0.9825);">Nov 09</span>
<span class="t" style="left:786.43px;top:829.90px;font-size:13px;line-height:13px;color:#605e5c;transform:scaleX(1.0212);">Nov 11</span>
<span class="t" style="left:306.04px;top:688.65px;font-size:13.5px;line-height:13.5px;color:#252423;-webkit-text-stroke:0.46px #252423;transform-origin:27.26px 50%;transform:rotate(-90deg) scaleX(1.0663);">Revenue</span>
<span class="t" style="left:824.53px;top:592.52px;font-size:12px;line-height:12px;color:#252423;-webkit-text-stroke:0.41px #252423;transform-origin:25.67px 50%;transform:rotate(-90deg) scaleX(0.9274);">source_l1</span>
<span class="t" style="left:829.20px;top:779.42px;font-size:12px;line-height:12px;color:#252423;-webkit-text-stroke:0.41px #252423;transform-origin:21.00px 50%;transform:rotate(-90deg) scaleX(0.9452);">medium</span>
<span class="t" style="left:878.44px;top:567.85px;font-size:13px;line-height:13px;color:#605e5c;transform:scaleX(0.9842);">Google</span>
<span class="t" style="left:890.03px;top:591.85px;font-size:13px;line-height:13px;color:#605e5c;transform:scaleX(1.0235);">Meta</span>
<span class="t" style="left:875.33px;top:616.10px;font-size:13px;line-height:13px;color:#605e5c;transform:scaleX(0.9772);">Ostatné</span>
<span class="t" style="left:917.25px;top:647.30px;font-size:13px;line-height:13px;color:#605e5c;transform:scaleX(0.9223);">0K €</span>
<span class="t" style="left:991.12px;top:647.30px;font-size:13px;line-height:13px;color:#605e5c;transform:scaleX(0.9091);">5K €</span>
<span class="t" style="left:1060.85px;top:647.30px;font-size:13px;line-height:13px;color:#605e5c;transform:scaleX(0.9087);">10K €</span>
<span class="t" style="left:870.48px;top:764.30px;font-size:13px;line-height:13px;color:#605e5c;transform:scaleX(0.8759);">cpc</span>
<span class="t" style="left:865.71px;top:794.30px;font-size:13px;line-height:13px;color:#605e5c;transform:scaleX(1.0412);">N/A</span>
<span class="t" style="left:887.25px;top:844.10px;font-size:13px;line-height:13px;color:#605e5c;transform:scaleX(0.9223);">0K €</span>
<span class="t" style="left:1004.84px;top:844.10px;font-size:13px;line-height:13px;color:#605e5c;transform:scaleX(0.9378);">5K €</span>
<svg class="ov" width="1913" height="1079" viewBox="0 0 1913 1079" shape-rendering="auto"><path d="M677.5 210 L684.0 217 L690.5 210" stroke="#6b6967" stroke-width="1" fill="none" stroke-linecap="round" stroke-linejoin="round"/><path d="M819.5 208.6 L824.65 214.4 L829.8 208.6" stroke="#6b6967" stroke-width="1" fill="none" stroke-linecap="round" stroke-linejoin="round"/><path d="M1009.75 210 L1015.125 216.2 L1020.5 210" stroke="#6b6967" stroke-width="1" fill="none" stroke-linecap="round" stroke-linejoin="round"/><path d="M1214.75 211.2 L1221.625 218.8 L1228.5 211.2" stroke="#6b6967" stroke-width="1" fill="none" stroke-linecap="round" stroke-linejoin="round"/><path d="M1495 211.2 L1502.0 218.8 L1509 211.2" stroke="#6b6967" stroke-width="1" fill="none" stroke-linecap="round" stroke-linejoin="round"/><path d="M1558.3 202.3 H1593.5 V255.6 L1575.9 246.4 L1558.3 255.6 Z" stroke="#616060" stroke-width="2.8" fill="none" stroke-linejoin="miter"/><path d="M615.8 473.2 L623.5 465.5 M619.2 465.3 H623.7 V469.8" stroke="#1f9f4d" stroke-width="1.1" fill="none"/><path d="M837.8 473.2 L845.5 465.5 M841.2 465.3 H845.7 V469.8" stroke="#1f9f4d" stroke-width="1.1" fill="none"/><path d="M1051.05 465.3 L1058.75 473 M1054.45 473.2 H1058.95 V468.7" stroke="#d2262e" stroke-width="1.1" fill="none"/><path d="M1273.05 473.2 L1280.75 465.5 M1276.45 465.3 H1280.95 V469.8" stroke="#1f9f4d" stroke-width="1.1" fill="none"/><path d="M1496.05 465.3 L1503.75 473 M1499.45 473.2 H1503.95 V468.7" stroke="#d2262e" stroke-width="1.1" fill="none"/><path d="M1059.2 360.6 L1064.6 366.4 M1064.6 360.6 L1059.2 366.4" stroke="#d2262e" stroke-width="1.9" fill="none"/><circle cx="330.75" cy="543.6" r="5" fill="#c8c8c8"/><circle cx="402.5" cy="543.6" r="5" fill="#2e7d32"/><circle cx="500.75" cy="543.6" r="5" fill="#f28e1c"/><path d="M371.5 567.5 H833" stroke="#d4d4d4" stroke-width="1" stroke-dasharray="1 3.4"/><path d="M371.5 631.75 H833" stroke="#d4d4d4" stroke-width="1" stroke-dasharray="1 3.4"/><path d="M371.5 696.4 H833" stroke="#d4d4d4" stroke-width="1" stroke-dasharray="1 3.4"/><path d="M371.5 760.4 H833" stroke="#d4d4d4" stroke-width="1" stroke-dasharray="1 3.4"/><path d="M371.5 824.4 H833" stroke="#d4d4d4" stroke-width="1" stroke-dasharray="1 3.4"/><path d="M399.4 567.5 V824.4" stroke="#d4d4d4" stroke-width="1" stroke-dasharray="1 3.4"/><path d="M535.4 567.5 V824.4" stroke="#d4d4d4" stroke-width="1" stroke-dasharray="1 3.4"/><path d="M671.2 567.5 V824.4" stroke="#d4d4d4" stroke-width="1" stroke-dasharray="1 3.4"/><path d="M806.6 567.5 V824.4" stroke="#d4d4d4" stroke-width="1" stroke-dasharray="1 3.4"/><rect x="372" y="585" width="54.25" height="239.39999999999998" fill="#cbcbcb"/><rect x="440" y="713.25" width="54.25" height="111.14999999999998" fill="#cbcbcb"/><rect x="508" y="748" width="53.75" height="76.39999999999998" fill="#cbcbcb"/><rect x="576" y="597.5" width="53.75" height="226.89999999999998" fill="#cbcbcb"/><rect x="643.75" y="646.75" width="53.75" height="177.64999999999998" fill="#cbcbcb"/><rect x="711.75" y="698" width="53.75" height="126.39999999999998" fill="#cbcbcb"/><rect x="779.25" y="683.25" width="53.75" height="141.14999999999998" fill="#cbcbcb"/><polyline points="399.25,682.5 467,772.5 535,790 603,699.7 670.5,733.75 738,759.5 806.75,745.5" stroke="#2e7d32" stroke-width="3" fill="none" stroke-linejoin="round" stroke-linecap="round"/><polyline points="399,735 467,733 535,741.25 603,730 670.5,727.3 738,733.25 806.75,740.5" stroke="#f28e1c" stroke-width="3" fill="none" stroke-linejoin="round" stroke-linecap="round"/><path d="M928.75 557 V642.5" stroke="#d4d4d4" stroke-width="1" stroke-dasharray="1 3.4"/><path d="M1003 557 V642.5" stroke="#d4d4d4" stroke-width="1" stroke-dasharray="1 3.4"/><path d="M1076.5 557 V642.5" stroke="#d4d4d4" stroke-width="1" stroke-dasharray="1 3.4"/><rect x="928.75" y="565" width="128.5" height="16.75" fill="#acbac4"/><rect x="928.75" y="589.25" width="63.0" height="16.5" fill="#acbac4"/><rect x="928.75" y="613.25" width="47.25" height="16.25" fill="#acbac4"/><rect x="1092.3" y="555.5" width="7.4" height="85.8" rx="3.7" fill="#ebebeb"/><rect x="1092.3" y="555.5" width="7.4" height="50" rx="3.7" fill="#b4b4b4"/><path d="M898.75 732 V840" stroke="#d4d4d4" stroke-width="1" stroke-dasharray="1 3.4"/><path d="M1017.25 732 V840" stroke="#d4d4d4" stroke-width="1" stroke-dasharray="1 3.4"/><rect x="898.75" y="759.4" width="144.0" height="21.850000000000023" fill="#acbac4"/><rect x="898.75" y="789.2" width="70.25" height="21.549999999999955" fill="#acbac4"/></svg>
<svg class="ov" width="1913" height="1079" viewBox="0 0 1913 1079"><rect x="1111" y="526.75" width="168.00" height="147.00" fill="#544848"/><rect x="1111" y="676.25" width="168.00" height="92.00" fill="#373d4a"/><rect x="1111" y="770.25" width="168.00" height="78.75" fill="#8fb525"/><rect x="1281" y="526.75" width="133.25" height="95.25" fill="#dfd0c0"/><rect x="1281" y="624.25" width="133.25" height="90.00" fill="#0e252d"/><rect x="1281" y="716.75" width="133.25" height="72.50" fill="#3a55b8"/><rect x="1281" y="791.25" width="133.25" height="57.75" fill="#a6697b"/><rect x="1416.75" y="526.75" width="79.00" height="96.50" fill="#0068b8"/><rect x="1498.25" y="526.75" width="72.50" height="96.50" fill="#fcae5b"/><rect x="1572.75" y="526.75" width="64.50" height="96.50" fill="#60646e"/><rect x="1416.75" y="625.75" width="68.50" height="76.00" fill="#a8f010"/><rect x="1487.25" y="625.75" width="41.25" height="76.00" fill="#474a53"/><rect x="1530.75" y="625.75" width="39.50" height="76.00" fill="#fbb878"/><rect x="1572" y="625.75" width="35.25" height="76.00" fill="#c8f258"/><rect x="1609" y="625.75" width="28.25" height="76.00" fill="#60646e"/><rect x="1416.75" y="704.25" width="55.25" height="35.75" fill="#6c7db8"/><rect x="1474" y="704.25" width="47.50" height="37.00" fill="#4a94cc"/><rect x="1524" y="704.25" width="34.25" height="43.75" fill="#123a5e"/><rect x="1416.75" y="742.5" width="55.25" height="35.30" fill="#bda552"/><rect x="1474" y="743.75" width="47.50" height="34.55" fill="#1b2c63"/><rect x="1416.75" y="779.8" width="55.25" height="34.00" fill="#fee066"/><rect x="1474" y="780.5" width="47.50" height="33.30" fill="#8aa2ec"/><rect x="1416.75" y="815.8" width="55.25" height="33.20" fill="#7d4f5c"/><rect x="1474" y="816.1" width="47.50" height="32.90" fill="#736b66"/><rect x="1560.75" y="704.25" width="20.75" height="43.75" fill="#1f2128"/><rect x="1584" y="704.25" width="17.50" height="43.75" fill="#7b5530"/><rect x="1604" y="704.25" width="16.25" height="43.75" fill="#5b7a1a"/><rect x="1622.25" y="704.25" width="15.00" height="43.75" fill="#34353d"/><rect x="1524" y="751" width="32.70" height="19.60" fill="#47547c"/><rect x="1524" y="773" width="32.70" height="18.40" fill="#1b5c94"/><rect x="1524" y="793.4" width="32.70" height="18.40" fill="#fee08a"/><rect x="1524" y="813.8" width="32.70" height="17.00" fill="#857832"/><rect x="1524" y="833.1" width="32.70" height="15.90" fill="#a89e92"/><rect x="1559" y="751" width="14.70" height="28.40" fill="#84888e"/><rect x="1576" y="751" width="14.70" height="28.40" fill="#27408f"/><rect x="1593" y="751" width="13.90" height="28.40" fill="#ba8a99"/><rect x="1608.9" y="751" width="12.90" height="28.40" fill="#573240"/><rect x="1624.2" y="751" width="13.05" height="28.40" fill="#0e1530"/><rect x="1559" y="782" width="22.40" height="15.80" fill="#544f4b"/><rect x="1559" y="800.5" width="22.40" height="15.30" fill="#0000c8"/><rect x="1559" y="818.4" width="22.40" height="14.00" fill="#3b3a4e"/><rect x="1559" y="834.9" width="22.40" height="14.10" fill="#fafa5a"/><rect x="1583.5" y="782" width="13.50" height="22.60" fill="#3fe81c"/><rect x="1599.4" y="782" width="13.30" height="22.60" fill="#605e70"/><rect x="1615" y="782" width="10.60" height="22.60" fill="#a7bcee"/><rect x="1628" y="782" width="9.25" height="22.60" fill="#a08bea"/><rect x="1583.5" y="807.3" width="16.30" height="13.30" fill="#2c323c"/><rect x="1602" y="807.3" width="11.60" height="15.20" fill="#5535be"/><rect x="1615.7" y="807.3" width="10.60" height="15.20" fill="#e3e1c5"/><rect x="1628.7" y="807.3" width="8.55" height="15.20" fill="#3f55c8"/><rect x="1583.5" y="823.2" width="16.30" height="11.30" fill="#c8f85a"/><rect x="1602" y="825" width="16.80" height="7.40" fill="#5f5e6e"/><rect x="1620.8" y="825" width="7.20" height="13.50" fill="#7c7c88"/><rect x="1630.4" y="825" width="6.85" height="13.50" fill="#aea0ee"/><rect x="1583.5" y="837.2" width="16.30" height="11.80" fill="#a87060"/><rect x="1602" y="834.9" width="16.80" height="5.70" fill="#faf264"/><rect x="1602" y="843" width="16.80" height="6.00" fill="#7ceb50"/><rect x="1620.8" y="840.6" width="10.60" height="8.40" fill="#d2fa82"/><rect x="1633.5" y="840.6" width="3.75" height="8.40" fill="#b48278"/></svg>
<span class="t" style="left:1114.07px;top:532.88px;font-size:14.5px;line-height:14.5px;color:#ffffff;transform:scaleX(0.9279);">SKU-0081</span>
<span class="t" style="left:1113.92px;top:656.95px;font-size:15px;line-height:15px;color:#1f1f1f;transform:scaleX(0.9794);">1.35K€</span>
<span class="t" style="left:1114.07px;top:682.38px;font-size:14.5px;line-height:14.5px;color:#ffffff;transform:scaleX(0.9277);">SKU-00100</span>
<span class="t" style="left:1114.90px;top:751.45px;font-size:15px;line-height:15px;color:#1f1f1f;transform:scaleX(0.9639);">0.86K€</span>
<span class="t" style="left:1114.08px;top:776.38px;font-size:14.5px;line-height:14.5px;color:#f4fbe0;transform:scaleX(0.9247);">SKU-0054</span>
<span class="t" style="left:1114.90px;top:832.20px;font-size:15px;line-height:15px;color:#1f1f1f;transform:scaleX(0.9639);">0.73K€</span>
<span class="t" style="left:1284.07px;top:532.88px;font-size:14.5px;line-height:14.5px;color:#f6f0ea;transform:scaleX(0.9283);">SKU-0097</span>
<span class="t" style="left:1284.90px;top:605.20px;font-size:15px;line-height:15px;color:#1f1f1f;transform:scaleX(0.9639);">0.70K€</span>
<span class="t" style="left:1284.07px;top:630.38px;font-size:14.5px;line-height:14.5px;color:#ffffff;transform:scaleX(0.9261);">SKU-00108</span>
<span class="t" style="left:1284.90px;top:697.45px;font-size:15px;line-height:15px;color:#1f1f1f;transform:scaleX(0.9639);">0.67K€</span>
<span class="t" style="left:1284.08px;top:722.88px;font-size:14.5px;line-height:14.5px;color:#ffffff;transform:scaleX(0.9247);">SKU-0064</span>
<span class="t" style="left:1284.90px;top:772.45px;font-size:15px;line-height:15px;color:#1f1f1f;transform:scaleX(0.9639);">0.54K€</span>
<span class="t" style="left:1284.07px;top:797.38px;font-size:14.5px;line-height:14.5px;color:#ffffff;transform:scaleX(0.9332);">SKU-00121</span>
<span class="t" style="left:1284.90px;top:832.20px;font-size:15px;line-height:15px;color:#1f1f1f;transform:scaleX(0.9639);">0.43K€</span>
<span class="t" style="left:1419.82px;top:532.88px;font-size:14.5px;line-height:14.5px;color:#ffffff;transform:scaleX(0.9344);">SKU-0078</span>
<span class="t" style="left:1420.65px;top:606.45px;font-size:15px;line-height:15px;color:#1f1f1f;transform:scaleX(0.9692);">0.43K€</span>
<span class="t" style="left:1501.33px;top:532.88px;font-size:14.5px;line-height:14.5px;color:#fdebd6;transform:scaleX(0.9222);">SKU-001...</span>
<span class="t" style="left:1502.15px;top:606.45px;font-size:15px;line-height:15px;color:#1f1f1f;transform:scaleX(0.9629);">0.39K€</span>
<span class="t" style="left:1575.83px;top:532.88px;font-size:14.5px;line-height:14.5px;color:#ffffff;transform:scaleX(0.9208);">SKU-0...</span>
<span class="t" style="left:1576.65px;top:606.45px;font-size:15px;line-height:15px;color:#1f1f1f;transform:scaleX(0.9692);">0.35K€</span>
<span class="t" style="left:1419.84px;top:631.88px;font-size:14.5px;line-height:14.5px;color:#e9fbc0;transform:scaleX(0.9065);">SKU-00...</span>
<span class="t" style="left:1420.65px;top:684.95px;font-size:15px;line-height:15px;color:#1f1f1f;transform:scaleX(0.9692);">0.29K€</span>
<span class="t" style="left:1490.88px;top:631.88px;font-size:14.5px;line-height:14.5px;color:#ffffff;transform:scaleX(0.8682);">SK...</span>
<span class="t" style="left:1491.65px;top:684.95px;font-size:15px;line-height:15px;color:#1f1f1f;transform:scaleX(0.9614);">0.1...</span>
<span class="t" style="left:1534.38px;top:631.88px;font-size:14.5px;line-height:14.5px;color:#fde6d0;transform:scaleX(0.8682);">SK...</span>
<span class="t" style="left:1535.15px;top:684.95px;font-size:15px;line-height:15px;color:#1f1f1f;transform:scaleX(0.9527);">0....</span>
<span class="t" style="left:1575.63px;top:631.88px;font-size:14.5px;line-height:14.5px;color:#effbd0;transform:scaleX(0.8682);">SK...</span>
<span class="t" style="left:1576.40px;top:684.95px;font-size:15px;line-height:15px;color:#1f1f1f;transform:scaleX(0.9527);">0....</span>
<span class="t" style="left:1612.13px;top:684.95px;font-size:15px;line-height:15px;color:#1f1f1f;transform:scaleX(1.0254);">...</span>
<span class="t" style="left:1420.35px;top:710.38px;font-size:14.5px;line-height:14.5px;color:#ffffff;transform:scaleX(0.9022);">SKU-...</span>
<span class="t" style="left:1477.61px;top:710.38px;font-size:14.5px;line-height:14.5px;color:#ffffff;transform:scaleX(0.8823);">SKU...</span>
<span class="t" style="left:1527.63px;top:710.38px;font-size:14.5px;line-height:14.5px;color:#ffffff;transform:scaleX(0.8596);">SK...</span>
<span class="t" style="left:1420.35px;top:748.63px;font-size:14.5px;line-height:14.5px;color:#f5efda;transform:scaleX(0.9022);">SKU-...</span>
<span class="t" style="left:1477.61px;top:749.88px;font-size:14.5px;line-height:14.5px;color:#ffffff;transform:scaleX(0.8823);">SKU...</span>
<span class="t" style="left:1420.35px;top:785.93px;font-size:14.5px;line-height:14.5px;color:#fff6d2;transform:scaleX(0.9022);">SKU-...</span>
<span class="t" style="left:1477.61px;top:786.63px;font-size:14.5px;line-height:14.5px;color:#ffffff;transform:scaleX(0.8823);">SKU...</span>
<span class="t" style="left:1420.35px;top:821.93px;font-size:14.5px;line-height:14.5px;color:#ffffff;transform:scaleX(0.9022);">SKU-...</span>
<span class="t" style="left:1477.61px;top:822.23px;font-size:14.5px;line-height:14.5px;color:#ffffff;transform:scaleX(0.8823);">SKU...</span>
</body></html>
